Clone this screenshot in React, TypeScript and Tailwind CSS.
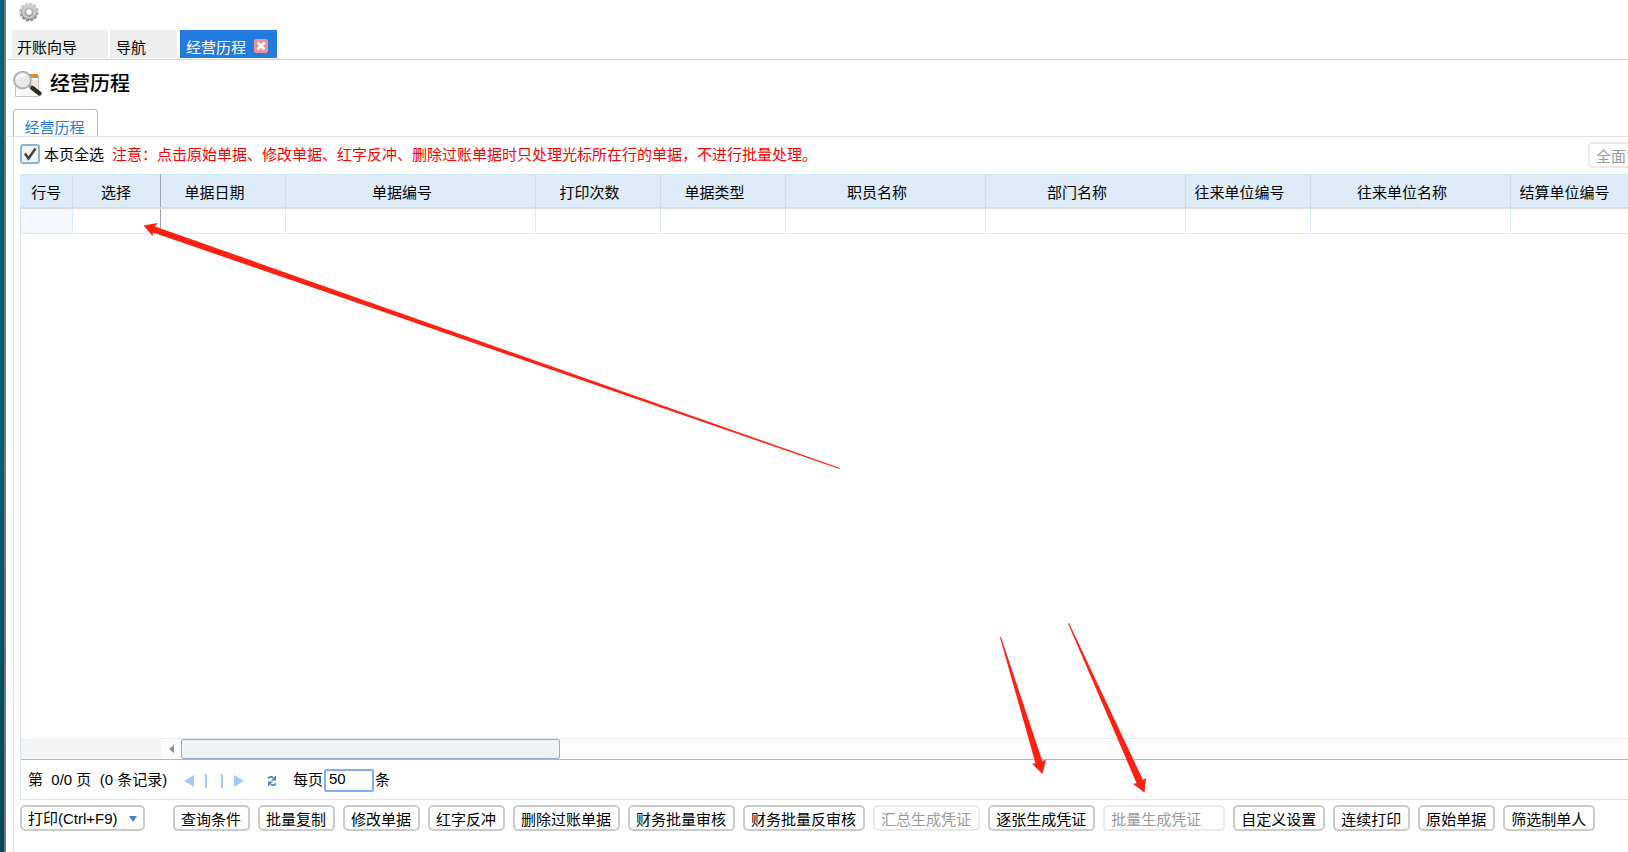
import type { ReactNode } from 'react'

const columns = [
  { name: '单据日期', width: 'w-[125px]' },
  { name: '单据编号', width: 'w-[250px]' },
  { name: '打印次数', width: 'w-[125px]' },
  { name: '单据类型', width: 'w-[125px]' },
  { name: '职员名称', width: 'w-[200px]' },
  { name: '部门名称', width: 'w-[200px]' },
  { name: '往来单位编号', width: 'w-[125px]' },
  { name: '往来单位名称', width: 'w-[200px]' },
  { name: '结算单位编号', width: 'w-[125px]' },
]

const actions = [
  { label: '查询条件' },
  { label: '批量复制' },
  { label: '修改单据' },
  { label: '红字反冲' },
  { label: '删除过账单据' },
  { label: '财务批量审核' },
  { label: '财务批量反审核' },
  { label: '汇总生成凭证', disabled: true },
  { label: '逐张生成凭证' },
  { label: '批量生成凭证', disabled: true, wide: true },
  { label: '自定义设置' },
  { label: '连续打印' },
  { label: '原始单据' },
  { label: '筛选制单人' },
]

function GearIcon() {
  return (
    <svg className="h-5 w-5" viewBox="0 0 20 20" aria-hidden="true">
      <defs>
        <linearGradient id="gear" x1="0" y1="0" x2="0" y2="1">
          <stop offset="0" stopColor="#cdcdcd" />
          <stop offset="1" stopColor="#8e8e8e" />
        </linearGradient>
      </defs>
      <circle cx="10" cy="10" r="8.6" fill="none" stroke="url(#gear)" strokeWidth="2" strokeDasharray="3 1.500" />
      <circle cx="10" cy="10" r="5.8" fill="none" stroke="url(#gear)" strokeWidth="5" />
      <circle cx="10" cy="10" r="5.8" fill="none" stroke="#d0d0d0" strokeWidth="2" />
      <circle cx="10" cy="10" r="3.200" fill="#fff" stroke="#9c9c9c" strokeWidth="0.8" />
    </svg>
  )
}

function SearchDocIcon() {
  return (
    <svg className="h-[28px] w-[30px] shrink-0" viewBox="0 0 30 28" aria-hidden="true">
      <path d="M2.500 5.500h23v21h-23z" fill="#f8f8f8" stroke="#c4c4c4" />
      <path d="M14 4h11v4H14z" fill="#d98f35" />
      <path d="M18 10h7v7h-7z" fill="#f5dfda" />
      <path d="M15.500 15l5 4" stroke="#a8a8a8" strokeWidth="4" />
      <path d="M19.500 18l7 5.500" stroke="#2c2c2c" strokeWidth="4.400" strokeLinecap="round" />
      <circle cx="9.500" cy="10" r="8.400" fill="#e9e9e9" stroke="#adadad" strokeWidth="1.800" />
      <path d="M3 10a6.500 6.500 0 0 1 11-4.500Q7 6 3 10z" fill="#fff" />
    </svg>
  )
}

function RefreshIcon() {
  return (
    <svg className="h-3 w-[10px]" viewBox="0 0 10 12" fill="none" stroke="#4a7fc0" strokeWidth="1.800" aria-hidden="true">
      <path d="M1 3.500Q3 .8 6.500 2.500" />
      <path d="M9 8.500Q7 11.200 3.500 9.500" />
      <path d="M9 .5v5H4z" fill="#4a7fc0" stroke="none" />
      <path d="M1 11.500v-5h5z" fill="#4a7fc0" stroke="none" />
    </svg>
  )
}

function ActionButton({ children, disabled, wide }: { children: ReactNode; disabled?: boolean; wide?: boolean }) {
  return (
    <button
      type="button"
      disabled={disabled}
      className={`h-[26px] shrink-0 rounded-[5px] border-2 bg-white pt-[2px] pl-[6px] leading-[22px] whitespace-nowrap ${
        wide ? 'pr-[22px]' : 'pr-[7px]'
      } ${disabled ? 'border-[#e9e9e9] text-[#999]' : 'border-[#cbcbcb] text-black'}`}
    >
      {children}
    </button>
  )
}

function Arrows() {
  return (
    <svg className="pointer-events-none absolute top-0 left-0 h-[852px] w-[1628px]" viewBox="0 0 1628 852" fill="#ff2012" aria-hidden="true">
      <path d="M143.500 225.500L157.500 223l-2.500 3.500L840 468l-.5 1L153 232.500l-.5 3.500z" />
      <path d="M1000 637.500l1-.5 41.500 124.500 3.500-2-3.500 14.500-10.500-10.500 3.500 0z" />
      <path d="M1068 623.500l1-.5 74 157 3-2-1.500 14.500-11.500-8.500 3.500-1z" />
    </svg>
  )
}

export default function App() {
  return (
    <div className="relative flex min-h-screen overflow-hidden bg-white font-['Liberation_Sans','Noto_Sans_CJK_SC',sans-serif] text-[15px] text-black">
      <div className="w-[6px] shrink-0 border-r-2 border-[#777] bg-linear-to-b from-[#00627a] via-[#006070] to-[#004858]" />
      <main className="flex min-w-0 flex-1 flex-col pl-px">
        <div className="flex h-[30px] items-start pt-[2px] pl-3">
          <button type="button" aria-label="设置">
            <GearIcon />
          </button>
        </div>

        <nav className="flex h-[30px] items-start border-b border-[#d5d5d5] pl-[5px] leading-9">
          <button type="button" className="h-7 w-24 bg-[#eee] pl-[5px] text-left">
            开账向导
          </button>
          <button type="button" className="ml-[2px] h-7 w-[67px] bg-[#eee] pl-[6px] text-left">
            导航
          </button>
          <div className="ml-[3px] flex h-7 w-[97px] bg-[#237be0] pl-[6px] text-white">
            <button type="button">经营历程</button>
            <button type="button" aria-label="关闭" className="mt-[9px] ml-2 h-[14px] w-[14px] rounded-[2px] bg-[#e6939c]">
              <svg viewBox="0 0 14 14" stroke="#fff" strokeWidth="2.600" aria-hidden="true">
                <path d="M3.500 3.500l7 7M10.500 3.500l-7 7" />
              </svg>
            </button>
          </div>
        </nav>

        <div className="flex h-[49px] items-center pb-[2px] pl-[6px]">
          <SearchDocIcon />
          <h1 className="ml-[7px] text-[20px] leading-6 font-medium">经营历程</h1>
        </div>

        <div className="flex h-[28px] items-end border-b border-[#e2e2e2] pl-[6px]">
          <button type="button" className="h-[27px] w-[85px] rounded-t-[4px] border border-b-0 border-[#94c3dc] bg-white pr-[2px] leading-9 text-[#237be0]">
            经营历程
          </button>
        </div>

        <section className="ml-[6px] flex flex-1 flex-col border-l border-[#e2e2e2] pl-[6px]">
          <div className="flex h-[37px] items-center">
            <label className="flex items-center">
              <span className="relative mb-1 flex h-5 w-5">
                <input type="checkbox" defaultChecked className="h-5 w-5 appearance-none rounded-[3px] border-2 border-[#8cb4cc] bg-[#f3f3f3]" />
                <svg className="pointer-events-none absolute h-5 w-5" viewBox="0 0 20 20" fill="none" stroke="#444" strokeWidth="2.500" aria-hidden="true">
                  <path d="M5 9.500l3.500 5L15.500 4.500" />
                </svg>
              </span>
              <span className="ml-1">本页全选</span>
            </label>
            <p className="ml-2 flex-1 whitespace-nowrap text-[#f00]">
              注意：点击原始单据、修改单据、红字反冲、删除过账单据时只处理光标所在行的单据，不进行批量处理。
            </p>
            <div className="w-10 overflow-hidden">
              <ActionButton disabled>全面审核</ActionButton>
            </div>
          </div>

          <div className="flex h-[626px] flex-col rounded-tl-[3px] border-b border-l border-[#d5e8f8]">
            <div className="flex-1 overflow-hidden">
              <table className="w-[1700px] table-fixed border-collapse">
                <thead>
                  <tr className="h-[33px] border-t border-b-2 border-t-[#cfe8f5] border-b-[#d8dbde] bg-[#deebf9]">
                    <th className="w-[51px] border-r border-[#d3d9df] p-0 pt-1 font-normal">行号</th>
                    <th className="w-[88px] border-r border-[#9ba5af] p-0 pt-1 font-normal">选择</th>
                    {columns.map((col) => (
                      <th key={col.name} className={`${col.width} border-r border-[#d3d9df] p-0 pt-1 pr-4 font-normal whitespace-nowrap`}>
                        {col.name}
                      </th>
                    ))}
                    <th />
                  </tr>
                </thead>
                <tbody>
                  <tr className="h-[26px] border-b border-[#d9eaf9]">
                    <td className="border-r border-[#d9eaf9] bg-[#f3f6fa]" />
                    <td className="border-r border-[#9ba5af]" />
                    {columns.map((col) => (
                      <td key={col.name} className="border-r border-[#d9eaf9]" />
                    ))}
                    <td />
                  </tr>
                </tbody>
              </table>
            </div>

            <div className="flex h-[22px] border-b border-[#b5b5b5]">
              <div className="w-[140px] bg-[#f3f4f6]" />
              <div className="flex flex-1 border-t border-[#e8e8e8] bg-[#fdfdfd]">
                <button type="button" aria-label="向左滚动" className="flex w-5 items-center justify-center">
                  <svg className="h-2 w-[5px]" viewBox="0 0 5 8" fill="#8c8c8c" aria-hidden="true">
                    <path d="M5 0v8L0 4z" />
                  </svg>
                </button>
                <div className="w-[379px] rounded-[2px] border border-[#96a9d9] bg-[#eef2f6]" />
              </div>
            </div>

            <div className="flex h-[39px] items-center pt-[2px] pl-[7px] whitespace-pre">
              <span className="w-[138px]">第  0/0 页  (0 条记录)</span>
              <button type="button" aria-label="上一页" className="ml-[18px]">
                <svg className="h-3 w-[10px]" viewBox="0 0 10 12" fill="#a6c9f8" aria-hidden="true">
                  <path d="M10 0v12L0 6z" />
                </svg>
              </button>
              <span className="ml-[11px] h-[14px] w-[2px] bg-[#a6c9f8]" />
              <span className="ml-[14px] h-[14px] w-[2px] bg-[#a6c9f8]" />
              <button type="button" aria-label="下一页" className="ml-[11px]">
                <svg className="h-3 w-[10px]" viewBox="0 0 10 12" fill="#a6c9f8" aria-hidden="true">
                  <path d="M0 0v12l10-6z" />
                </svg>
              </button>
              <button type="button" aria-label="刷新" className="ml-[23px]">
                <RefreshIcon />
              </button>
              <label className="ml-4 flex items-center">
                每页
                <input defaultValue="50" className="mx-px h-[23px] w-[50px] rounded-[2px] border-2 border-[#7eaff5] px-[3px] pb-1 text-[15px]" />
                条
              </label>
            </div>
          </div>

          <div className="mt-[5px] flex gap-2">
            <button type="button" className="mr-[20px] flex h-[26px] w-[125px] shrink-0 items-center rounded-[5px] border-2 border-[#cbcbcb] pt-[2px] pl-[6px]">
              打印(Ctrl+F9)
              <svg className="ml-[11px] h-[6px] w-2" viewBox="0 0 8 6" fill="#4a7fc0" aria-hidden="true">
                <path d="M0 0h8L4 6z" />
              </svg>
            </button>
            {actions.map((action) => (
              <ActionButton key={action.label} disabled={action.disabled} wide={action.wide}>
                {action.label}
              </ActionButton>
            ))}
          </div>
        </section>
      </main>
      <Arrows />
    </div>
  )
}
